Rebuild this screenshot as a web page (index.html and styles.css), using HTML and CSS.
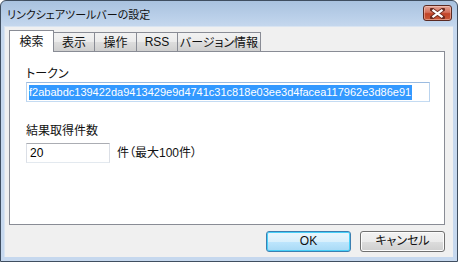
FILE: index.html
```html
<!DOCTYPE html>
<html lang="ja">
<head>
<meta charset="utf-8">
<link rel="stylesheet" href="styles.css">
</head>
<body>
<div class="window">
  <div class="titlebar">
    <span class="title">リンクシェアツールバーの設定</span>
    <div class="close">
      <svg width="15" height="11" viewBox="0 0 15 11">
        <path d="M2 1.5 L13 9.5 M13 1.5 L2 9.5" stroke="#6b2a1f" stroke-width="4" stroke-linecap="square"/>
        <path d="M2.5 1.8 L12.5 9.2 M12.5 1.8 L2.5 9.2" stroke="#ffffff" stroke-width="2.2" stroke-linecap="butt"/>
      </svg>
    </div>
  </div>
  <div class="client">
    <div class="tabs">
      <div class="tab active">検索</div>
      <div class="tab">表示</div>
      <div class="tab">操作</div>
      <div class="tab">RSS</div>
      <div class="tab kana">バージョン情報</div>
    </div>
    <div class="panel">
      <div class="label kana">トークン</div>
      <div class="textbox token"><span class="sel">f2ababdc139422da9413429e9d4741c31c818e03ee3d4facea117962e3d86e91</span></div>
      <div class="label">結果取得件数</div>
      <div class="row">
        <div class="textbox num">20</div>
        <span class="suffix kana">件（最大100件）</span>
      </div>
    </div>
    <div class="buttons">
      <div class="btn default">OK</div>
      <div class="btn kana">キャンセル</div>
    </div>
  </div>
</div>
</body>
</html>
```

FILE: styles.css
```css
html, body {
  margin: 0;
  padding: 0;
}
body {
  width: 458px;
  height: 262px;
  overflow: hidden;
  background: #ffffff;
  font-family: "Liberation Sans", "Noto Sans CJK JP", sans-serif;
  font-size: 12px;
  color: #000;
}
.kana {
  font-feature-settings: "palt";
}
.window {
  box-sizing: border-box;
  width: 458px;
  height: 262px;
  border: 1px solid #3f4e60;
  border-radius: 6px 6px 0 0;
  background: linear-gradient(#a9c2df 0px, #bcd1ea 18px, #c6d8ee 26px, #c6d8ee 100%);
  padding: 0 4px 4px 3px;
  display: flex;
  flex-direction: column;
}
.titlebar {
  height: 25px;
  flex: none;
  display: flex;
  justify-content: space-between;
  align-items: flex-start;
}
.title {
  font-family: "Noto Sans CJK JP", sans-serif;
  font-feature-settings: "palt";
  font-size: 11px;
  line-height: 16px;
  margin-top: 5px;
  padding-left: 3px;
  color: #111;
}
.close {
  box-sizing: border-box;
  width: 29px;
  height: 16px;
  margin-top: 4px;
  margin-right: 1px;
  border: 1px solid #5b2a22;
  border-radius: 3px;
  background: linear-gradient(#e3a597 0%, #d4715c 45%, #c24327 55%, #c85a3a 100%);
  box-shadow: inset 0 0 0 1px rgba(255, 220, 210, 0.45);
  display: flex;
  align-items: center;
  justify-content: center;
}
.close svg {
  display: block;
}
.client {
  flex: 1;
  background: #f0f0f0;
  box-shadow: inset 1px 1px 0 #d9e4f1;
  padding: 4px 8px 0 5px;
  display: flex;
  flex-direction: column;
}
.tabs {
  display: flex;
  align-items: flex-end;
  height: 21px;
  flex: none;
  position: relative;
  z-index: 1;
}
.tab {
  box-sizing: border-box;
  height: 19px;
  border: 1px solid #898c95;
  border-bottom: none;
  border-left: none;
  background: linear-gradient(#f2f2f2 0%, #ebebeb 50%, #dddddd 51%, #cfcfcf 100%);
  font-family: "Noto Sans CJK JP", sans-serif;
  line-height: 16px;
  padding: 1px 0 0;
  text-align: center;
  color: #111;
}
.tab:nth-child(2) { width: 41px; }
.tab:nth-child(3) { width: 42px; }
.tab:nth-child(4) { width: 41px; font-family: "Liberation Sans", sans-serif; }
.tab:nth-child(5) { width: 83px; }
.tab.active {
  width: 45px;
  height: 22px;
  margin-bottom: -1px;
  background: #ffffff;
  border-left: 1px solid #898c95;
  border-right: 1px solid #898c95;
  padding-top: 2px;
}
.panel {
  box-sizing: border-box;
  height: 174px;
  flex: none;
  background: #ffffff;
  border: 1px solid #898c95;
  padding: 14px 0 0 16px;
}
.label {
  font-family: "Noto Sans CJK JP", sans-serif;
  line-height: 14px;
  height: 14px;
  color: #111;
}
.textbox {
  box-sizing: border-box;
  height: 20px;
  background: #ffffff;
  border: 1px solid #abadb3;
  border-left-color: #dbdfe6;
  border-right-color: #dbdfe6;
  border-bottom-color: #e3e9ef;
  padding: 2px 0 0 2px;
}
.token {
  width: 404px;
  margin-top: 2px;
  margin-bottom: 21px;
  border-color: #9bbbe0 #b9d3ee #c4dbf2 #b9d3ee;
  font-size: 11px;
  line-height: 15px;
}
.sel {
  background: #3399ff;
  color: #ffffff;
  display: inline-block;
  height: 15px;
  padding-right: 1px;
}
.row {
  display: flex;
  align-items: center;
  margin-top: 6px;
}
.num {
  width: 84px;
  font-size: 12px;
  line-height: 15px;
  padding-left: 3px;
}
.suffix {
  margin-left: 7px;
  line-height: 16px;
  color: #111;
}
.buttons {
  display: flex;
  justify-content: flex-end;
  gap: 9px;
  margin-top: 6px;
}
.btn {
  box-sizing: border-box;
  width: 85px;
  height: 21px;
  border: 1px solid #707070;
  border-radius: 3px;
  background: linear-gradient(#f2f2f2 0%, #ebebeb 50%, #dddddd 51%, #cfcfcf 100%);
  box-shadow: inset 0 0 0 1px #fcfcfc;
  text-align: center;
  line-height: 18px;
  font-family: "Liberation Sans", "Noto Sans CJK JP", sans-serif;
  color: #111;
}
.btn.default {
  border-color: #3c7fb1;
  background: linear-gradient(#eaf6fd 0%, #d9f0fc 50%, #bee6fd 51%, #a7d9f5 100%);
  box-shadow: inset 0 0 0 1px #48d0f8;
}
```
